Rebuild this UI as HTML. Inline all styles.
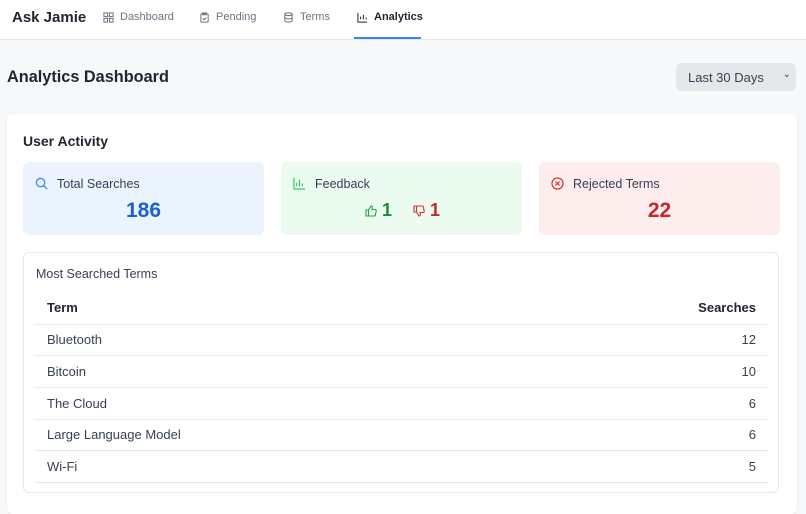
<!DOCTYPE html>
<html><head><style>
*{box-sizing:border-box;margin:0;padding:0}
body{width:806px;height:505px;overflow:hidden;background:#f7f8fa;font-family:"Liberation Sans",sans-serif;color:#1f2430}
.hdr{position:absolute;left:0;top:0;width:806px;height:40px;background:#fff;border-bottom:1px solid #e5e7eb}
.logo{position:absolute;left:12px;top:9px;font-size:15px;font-weight:bold;color:#1f2430}
.nav{position:absolute;top:11px;font-size:11px;color:#6b7280;display:flex;align-items:center;gap:6px}
.nav svg{width:11px;height:11px}
.act{color:#1f2430;font-weight:bold}
.ul{position:absolute;left:354px;top:37px;width:67px;height:2px;background:#3b82f6}
h1{position:absolute;left:7px;top:68px;font-size:16.3px;font-weight:bold}
.sel{position:absolute;left:676px;top:63px;width:120px;height:28px;background:#e5e7eb;border-radius:5px;font-size:13px;color:#374151;padding:7px 0 0 12px}
.sel span{position:absolute;right:5px;top:6px;font-size:10px}
.card{position:absolute;left:7px;top:114px;width:790px;height:400px;background:#fff;border-radius:6px;box-shadow:0 1px 2px rgba(0,0,0,.08)}
h2{position:absolute;left:23px;top:133px;font-size:14px;font-weight:bold;color:#1f2430}
.st{position:absolute;top:162px;width:241px;height:73px;border-radius:6px}
.st .t{position:absolute;left:34px;top:15px;font-size:12.5px;color:#374151}
.st svg.i{position:absolute;left:12px;top:15px;width:13px;height:13px}
.st .n{position:absolute;top:37px;width:100%;text-align:center;font-size:21px;font-weight:bold}
.tb{position:absolute;left:23px;top:252px;width:756px;height:241px;border:1px solid #e5e7eb;border-radius:6px}
.tb .cap{position:absolute;left:12px;top:14px;font-size:12.5px;color:#374151}
table{position:absolute;left:11px;top:39px;width:733px;border-collapse:collapse;font-size:13px}
td,th{height:31.7px;padding:0 12px;border-bottom:1px solid #e5e7eb;text-align:left;color:#374151}
th{font-weight:bold;color:#1f2430;height:32px}
.r{text-align:right}
.fb{position:absolute;top:38px;font-size:18px;font-weight:bold;display:flex;align-items:center;gap:5px}
</style></head><body>
<div class="hdr">
<div class="logo">Ask Jamie</div>
<div class="nav" style="left:103px"><svg viewBox="0 0 12 12" fill="none" stroke="#6b7280" stroke-width="1.1"><rect x="1" y="1" width="4" height="4"/><rect x="7" y="1" width="4" height="4"/><rect x="1" y="7" width="4" height="4"/><rect x="7" y="7" width="4" height="4"/></svg>Dashboard</div>
<div class="nav" style="left:199px"><svg viewBox="0 0 12 12" fill="none" stroke="#6b7280" stroke-width="1.1"><rect x="2" y="2" width="8" height="9" rx="1"/><path d="M4 1h4v2H4zM4 7l1.5 1.5L8 6"/></svg>Pending</div>
<div class="nav" style="left:283px"><svg viewBox="0 0 12 12" fill="none" stroke="#6b7280" stroke-width="1.1"><ellipse cx="6" cy="2.5" rx="4" ry="1.5"/><path d="M2 2.5v7c0 .8 1.8 1.5 4 1.5s4-.7 4-1.5v-7M2 6c0 .8 1.8 1.5 4 1.5S10 6.8 10 6"/></svg>Terms</div>
<div class="nav act" style="left:357px"><svg viewBox="0 0 12 12" fill="none" stroke="#1f2430" stroke-width="1.1"><path d="M1 1v10h10M4 8V5M7 8V3M10 8V6"/></svg>Analytics</div>
<div class="ul"></div>
</div>
<h1>Analytics Dashboard</h1>
<div class="sel">Last 30 Days<span>⌄</span></div>
<div class="card"></div>
<h2>User Activity</h2>
<div class="st" style="left:23px;background:#eaf3fe"><svg class="i" viewBox="0 0 14 14" fill="none" stroke="#3b82f6" stroke-width="1.4"><circle cx="6" cy="6" r="4.5"/><path d="M9.5 9.5L13 13"/></svg><div class="t">Total Searches</div><div class="n" style="color:#1d5fd6">186</div></div>
<div class="st" style="left:281px;background:#ebfbef"><svg class="i" viewBox="0 0 14 14" fill="none" stroke="#22c55e" stroke-width="1.2"><path d="M1 1v12h12M4 10V6M7 10V3M10 10V7"/></svg><div class="t">Feedback</div>
<div class="fb" style="left:84px;color:#1f8a3e"><svg width="12" height="12" viewBox="0 0 12 12" fill="none" stroke="#22a04a" stroke-width="1.1"><path d="M1 5h2.5v6H1zM3.5 5L6 1c1 0 1.5.6 1.3 1.6L7 4.5h3.2c.7 0 1.1.6 1 1.2l-.8 4.2c-.1.6-.6 1.1-1.2 1.1H3.5"/></svg>1</div>
<div class="fb" style="left:132px;color:#c22828"><svg width="12" height="12" viewBox="0 0 12 12" fill="none" stroke="#d03030" stroke-width="1.1"><path d="M1 1h2.5v6H1zM3.5 7L6 11c1 0 1.5-.6 1.3-1.6L7 7.5h3.2c.7 0 1.1-.6 1-1.2l-.8-4.2C10.3 1.5 9.8 1 9.2 1H3.5"/></svg>1</div></div>
<div class="st" style="left:539px;background:#fdeded"><svg class="i" viewBox="0 0 14 14" fill="none" stroke="#dc2626" stroke-width="1.2"><circle cx="7" cy="7" r="6"/><path d="M4.8 4.8l4.4 4.4M9.2 4.8l-4.4 4.4"/></svg><div class="t">Rejected Terms</div><div class="n" style="color:#c22828">22</div></div>
<div class="tb"><div class="cap">Most Searched Terms</div>
<table><tr><th>Term</th><th class="r">Searches</th></tr>
<tr><td>Bluetooth</td><td class="r">12</td></tr>
<tr><td>Bitcoin</td><td class="r">10</td></tr>
<tr><td>The Cloud</td><td class="r">6</td></tr>
<tr><td>Large Language Model</td><td class="r">6</td></tr>
<tr><td>Wi-Fi</td><td class="r">5</td></tr></table></div>
</body></html>
